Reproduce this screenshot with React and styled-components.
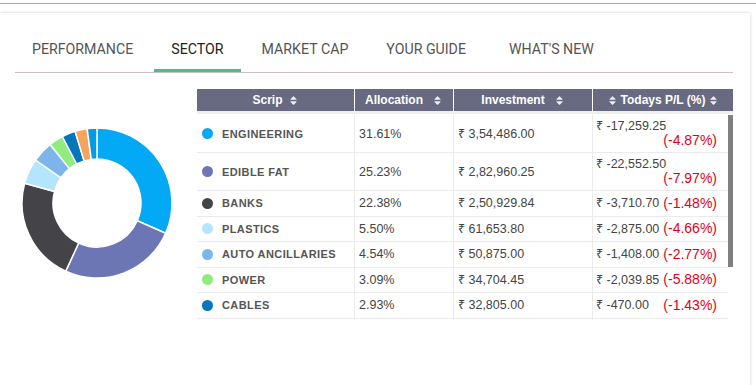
import React from "react";
import styled, { createGlobalStyle } from "styled-components";
import { FaSort } from "react-icons/fa";

const GlobalStyle = createGlobalStyle`
  body {
    margin: 0;
    background: #fff;
    font-family: "Liberation Sans", Arial, sans-serif;
  }
`;

// last two sectors are below the fold of the table, only the chart shows them
const sectors = [
  { name: "ENGINEERING", color: "#03a9f4", share: 31.61, inv: "₹ 3,54,486.00", pl: "₹ -17,259.25", pct: "(-4.87%)", stacked: true },
  { name: "EDIBLE FAT", color: "#6c76b4", share: 25.23, inv: "₹ 2,82,960.25", pl: "₹ -22,552.50", pct: "(-7.97%)", stacked: true },
  { name: "BANKS", color: "#434348", share: 22.38, inv: "₹ 2,50,929.84", pl: "₹ -3,710.70", pct: "(-1.48%)" },
  { name: "PLASTICS", color: "#b3e5fc", share: 5.5, inv: "₹ 61,653.80", pl: "₹ -2,875.00", pct: "(-4.66%)" },
  { name: "AUTO ANCILLARIES", color: "#7cb5ec", share: 4.54, inv: "₹ 50,875.00", pl: "₹ -1,408.00", pct: "(-2.77%)" },
  { name: "POWER", color: "#90ed7d", share: 3.09, inv: "₹ 34,704.45", pl: "₹ -2,039.85", pct: "(-5.88%)" },
  { name: "CABLES", color: "#0277bd", share: 2.93, inv: "₹ 32,805.00", pl: "₹ -470.00", pct: "(-1.43%)" },
  { name: "CHEMICALS", color: "#f7a35c", share: 2.62, hidden: true },
  { name: "FINANCE", color: "#039be5", share: 2.1, hidden: true },
];

const tabs = ["PERFORMANCE", "SECTOR", "MARKET CAP", "YOUR GUIDE", "WHAT'S NEW"];

const TopBar = styled.div`
  height: 3px;
  border-bottom: 1px solid #a9a9a9;
`;

const Card = styled.div`
  box-sizing: border-box;
  width: 750px;
  min-height: 380px;
  margin-top: 9px;
  padding: 18px 17px 0 15px;
  background: #fff;
  box-shadow: 0 0 3px rgba(0, 0, 0, 0.2);
`;

const TabList = styled.div`
  display: flex;
  gap: 4px;
  border-bottom: 1px solid #c9bfc5;
`;

const Tab = styled.div`
  padding: 10px ${(p) => (p.$wide ? 22 : 17)}px 12px 17px;
  font-family: Roboto, "Liberation Sans", sans-serif;
  font-size: 14.2px;
  line-height: 16px;
  color: ${(p) => (p.$active ? "#222" : "#555")};
  border-bottom: 3px solid ${(p) => (p.$active ? "#4bbd8b" : "transparent")};
  cursor: pointer;
`;

const Content = styled.div`
  display: flex;
  align-items: flex-start;
  padding-top: 16px;
`;

const ChartBox = styled.div`
  width: 182px;
  margin-top: 34px;
  padding-left: 2px;
  box-sizing: border-box;
`;

const Table = styled.div`
  width: 536px;
`;

const HeadRow = styled.div`
  display: grid;
  grid-template-columns: 158px 99px 139px 140px;
  height: 22px;
  background: #686a82;
`;

const HeadCell = styled.div`
  display: flex;
  align-items: center;
  justify-content: center;
  gap: ${(p) => p.$gap || 6}px;
  color: #fff;
  font-weight: bold;
  font-size: 12px;
  border-right: 1px solid #fff;
  &:last-child {
    border-right: none;
  }
  svg {
    color: #eee;
    font-size: 11px;
  }
`;

const Body = styled.div`
  display: flex;
  height: 206px;
  border-top: 3px solid #efefef;
  overflow: hidden;
`;

const Rows = styled.div`
  width: 531px;
  padding-top: 1px;
`;

const ScrollRail = styled.div`
  width: 5px;
`;

const ScrollThumb = styled.div`
  height: 152px;
  margin-top: 1px;
  background: #808080;
`;

const Row = styled.div`
  display: grid;
  grid-template-columns: 158px 99px 139px 135px;
  border-bottom: 1px solid #ebebeb;
`;

const Cell = styled.div`
  box-sizing: border-box;
  display: flex;
  align-items: center;
  min-height: 24.5px;
  padding: 0 4px;
  border-right: 1px solid #ebebeb;
  font-size: 12.5px;
  line-height: 14px;
  color: #444;
  &:last-child {
    border-right: none;
  }
`;

const ScripCell = styled(Cell)`
  padding-left: 5px;
  gap: 9px;
  font-size: 11px;
  font-weight: bold;
  letter-spacing: 0.4px;
  color: #555;
`;

const Dot = styled.span`
  width: 11px;
  height: 11px;
  border-radius: 50%;
  background: ${(p) => p.$color};
  flex-shrink: 0;
`;

const PlCell = styled(Cell)`
  flex-wrap: wrap;
  align-content: center;
  padding: 4px 11px 4px 3px;
`;

const Amount = styled.span`
  font-size: 12.5px;
  line-height: 14px;
  color: #444;
`;

const Pct = styled.span`
  margin-left: auto;
  font-size: 14px;
  line-height: 15px;
  color: #e0001a;
  ${(p) => p.$stacked && "flex-basis: 100%; text-align: right;"}
`;

function pt(cx, cy, r, a) {
  const rad = (a * Math.PI) / 180;
  return [cx + r * Math.sin(rad), cy - r * Math.cos(rad)];
}

function slicePath(cx, cy, r0, r1, a0, a1) {
  const large = a1 - a0 > 180 ? 1 : 0;
  const [x0, y0] = pt(cx, cy, r1, a0);
  const [x1, y1] = pt(cx, cy, r1, a1);
  const [x2, y2] = pt(cx, cy, r0, a1);
  const [x3, y3] = pt(cx, cy, r0, a0);
  return `M${x0} ${y0} A${r1} ${r1} 0 ${large} 1 ${x1} ${y1} L${x2} ${y2} A${r0} ${r0} 0 ${large} 0 ${x3} ${y3} Z`;
}

function Donut({ data }) {
  let start = 0;
  return (
    <svg width="160" height="160" viewBox="0 0 160 160">
      {data.map((d) => {
        const end = start + (d.share / 100) * 360;
        const path = slicePath(80, 80, 44, 75, start, end);
        start = end;
        return (
          <path key={d.name} d={path} fill={d.color} stroke="#fff" strokeWidth="1.5" strokeLinejoin="round" />
        );
      })}
    </svg>
  );
}

export default function App() {
  return (
    <>
      <GlobalStyle />
      <TopBar />
      <Card>
        <TabList>
          {tabs.map((t) => (
            <Tab key={t} $active={t === "SECTOR"} $wide={t === "YOUR GUIDE"}>{t}</Tab>
          ))}
        </TabList>
        <Content>
          <ChartBox>
            <Donut data={sectors} />
          </ChartBox>
          <Table>
            <HeadRow>
              <HeadCell $gap={5}>Scrip <FaSort /></HeadCell>
              <HeadCell $gap={9}>Allocation <FaSort /></HeadCell>
              <HeadCell $gap={9}>Investment <FaSort /></HeadCell>
              <HeadCell $gap={3}><FaSort />Todays P/L (%) <FaSort /></HeadCell>
            </HeadRow>
            <Body>
              <Rows>
                {sectors.filter((s) => !s.hidden).map((s) => (
                  <Row key={s.name}>
                    <ScripCell>
                      <Dot $color={s.color} />
                      {s.name}
                    </ScripCell>
                    <Cell>{s.share.toFixed(2)}%</Cell>
                    <Cell>{s.inv}</Cell>
                    <PlCell>
                      <Amount>{s.pl}</Amount>
                      <Pct $stacked={s.stacked}>{s.pct}</Pct>
                    </PlCell>
                  </Row>
                ))}
                <Row>
                  <Cell />
                  <Cell />
                  <Cell />
                  <Cell />
                </Row>
              </Rows>
              <ScrollRail>
                <ScrollThumb />
              </ScrollRail>
            </Body>
          </Table>
        </Content>
      </Card>
    </>
  );
}
